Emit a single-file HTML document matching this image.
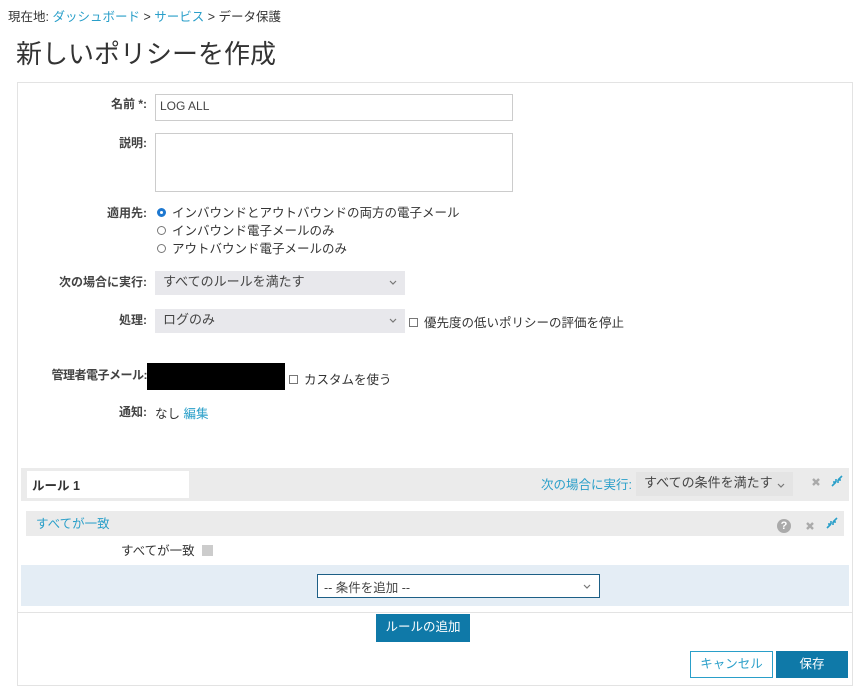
<!DOCTYPE html>
<html><head><meta charset="utf-8"><style>
*{box-sizing:border-box;margin:0;padding:0}
body{width:863px;height:693px;background:#fff;font-family:"Liberation Sans","Noto Sans CJK JP",sans-serif;font-size:13px;color:#333;position:relative;overflow:hidden}
.a{position:absolute;white-space:nowrap}
.lbl{position:absolute;right:716px;font-weight:bold;font-size:12px;color:#444;line-height:16px}
.lnk{color:#2a9fc9}
.sel{position:absolute;background:#e8e8ec;color:#444;padding:0 8px;height:24px;line-height:22px;font-size:13px}
.chev{position:absolute;right:8px;top:9px;width:8px;height:6px}
.rb{display:inline-block;width:9px;height:9px;border:1px solid #777;border-radius:50%;margin-right:6px;vertical-align:0px}
.cb{display:inline-block;width:9px;height:9px;border:1px solid #777;margin-right:6px;vertical-align:0px}
</style></head><body>
<div class="a" style="left:8px;top:6px;font-size:12.5px">現在地: <span class="lnk">ダッシュボード</span> &gt; <span class="lnk">サービス</span> &gt; データ保護</div>
<div class="a" style="left:16px;top:34px;font-size:26px;color:#333">新しいポリシーを作成</div>
<div class="a" style="left:17px;top:82px;width:836px;height:604px;border:1px solid #e3e3e3"></div>
<div class="lbl" style="top:96px">名前 *:</div>
<div class="a" style="left:155px;top:94px;width:358px;height:27px;border:1px solid #ccc;padding:4px 4px;font-size:12px;color:#444">LOG ALL</div>
<div class="lbl" style="top:135px">説明:</div>
<div class="a" style="left:155px;top:133px;width:358px;height:59px;border:1px solid #ccc"></div>
<div class="lbl" style="top:205px">適用先:</div>
<div class="a" style="left:157px;top:204px;line-height:18px;font-size:12.5px"><span class="rb" style="border:3px solid #1e78d0;background:#fff"></span>インバウンドとアウトバウンドの両方の電子メール<br><span class="rb"></span>インバウンド電子メールのみ<br><span class="rb"></span>アウトバウンド電子メールのみ</div>
<div class="lbl" style="top:274px">次の場合に実行:</div>
<div class="sel" style="left:155px;top:271px;width:250px">すべてのルールを満たす<svg class="chev" viewBox="0 0 8 6"><path d="M1 1l3 3 3-3" fill="none" stroke="#777" stroke-width="1.2"/></svg></div>
<div class="lbl" style="top:312px">処理:</div>
<div class="sel" style="left:155px;top:309px;width:250px">ログのみ<svg class="chev" viewBox="0 0 8 6"><path d="M1 1l3 3 3-3" fill="none" stroke="#777" stroke-width="1.2"/></svg></div>
<div class="a" style="left:409px;top:312px;font-size:12.5px"><span class="cb"></span>優先度の低いポリシーの評価を停止</div>
<div class="lbl" style="top:367px;right:716px;letter-spacing:-0.5px">管理者電子メール:</div>
<div class="a" style="left:147px;top:363px;width:138px;height:27px;background:#000"></div>
<div class="a" style="left:289px;top:369px;font-size:12.5px"><span class="cb"></span>カスタムを使う</div>
<div class="lbl" style="top:404px">通知:</div>
<div class="a" style="left:155px;top:403px;font-size:12.5px">なし <span class="lnk">編集</span></div>
<div class="a" style="left:21px;top:468px;width:828px;height:33px;background:#ebebeb"></div>
<div class="a" style="left:27px;top:471px;width:162px;height:27px;background:#fff;padding:4px 5px;font-weight:bold;font-size:12.5px">ルール 1</div>
<div class="a lnk" style="left:541px;top:474px;font-size:12.5px">次の場合に実行:</div>
<div class="sel" style="left:636px;top:472px;width:157px;background:#e4e4e4;padding-left:8px">すべての条件を満たす<svg class="chev" viewBox="0 0 8 6" style="top:11px"><path d="M1 1l3 3 3-3" fill="none" stroke="#777" stroke-width="1.2"/></svg></div>
<svg class="a" style="left:811px;top:477px" width="10" height="10" viewBox="0 0 10 10"><path d="M2 2l6 6M8 2l-6 6" stroke="#aaa" stroke-width="2.4"/></svg>
<svg class="a" style="left:831px;top:475px" width="12" height="12" viewBox="0 0 12 12"><path d="M1 11l4-4M5 7v-3M5 7h-3M11 1l-4 4M7 5v3M7 5h3" stroke="#2a9fc9" stroke-width="1.6" fill="none"/></svg>
<div class="a" style="left:26px;top:511px;width:818px;height:25px;background:#ebebeb"></div>
<div class="a lnk" style="left:36px;top:513px;font-size:12.5px">すべてが一致</div>
<div class="a" style="left:777px;top:519px;width:14px;height:14px;border-radius:50%;background:#aaa;color:#fff;font-size:11px;font-weight:bold;text-align:center;line-height:14px">?</div>
<svg class="a" style="left:805px;top:521px" width="10" height="10" viewBox="0 0 10 10"><path d="M2 2l6 6M8 2l-6 6" stroke="#aaa" stroke-width="2.4"/></svg>
<svg class="a" style="left:826px;top:517px" width="12" height="12" viewBox="0 0 12 12"><path d="M1 11l4-4M5 7v-3M5 7h-3M11 1l-4 4M7 5v3M7 5h3" stroke="#2a9fc9" stroke-width="1.6" fill="none"/></svg>
<div class="a" style="left:121px;top:540px;font-size:12.5px">すべてが一致 <span style="display:inline-block;width:11px;height:11px;background:#ccc;vertical-align:-1px;margin-left:4px"></span></div>
<div class="a" style="left:21px;top:565px;width:828px;height:41px;background:#e4edf5"></div>
<div class="a" style="left:317px;top:574px;width:283px;height:24px;background:#fff;border:1px solid #1d5f86;padding:2px 6px;font-size:12.5px;color:#444">-- 条件を追加 --<svg class="chev" viewBox="0 0 8 6"><path d="M1 1l3 3 3-3" fill="none" stroke="#777" stroke-width="1.2"/></svg></div>
<div class="a" style="left:18px;top:612px;width:834px;height:1px;background:#e3e3e3"></div>
<div class="a" style="left:376px;top:614px;width:94px;height:28px;background:#0f79a8;color:#fff;text-align:center;line-height:27px;font-size:12.5px">ルールの追加</div>
<div class="a" style="left:690px;top:651px;width:83px;height:27px;border:1px solid #2a9fc9;color:#2a9fc9;text-align:center;line-height:24px;font-size:12.5px">キャンセル</div>
<div class="a" style="left:776px;top:651px;width:72px;height:27px;background:#0f79a8;color:#fff;text-align:center;line-height:26px;font-size:12.5px">保存</div>
</body></html>
